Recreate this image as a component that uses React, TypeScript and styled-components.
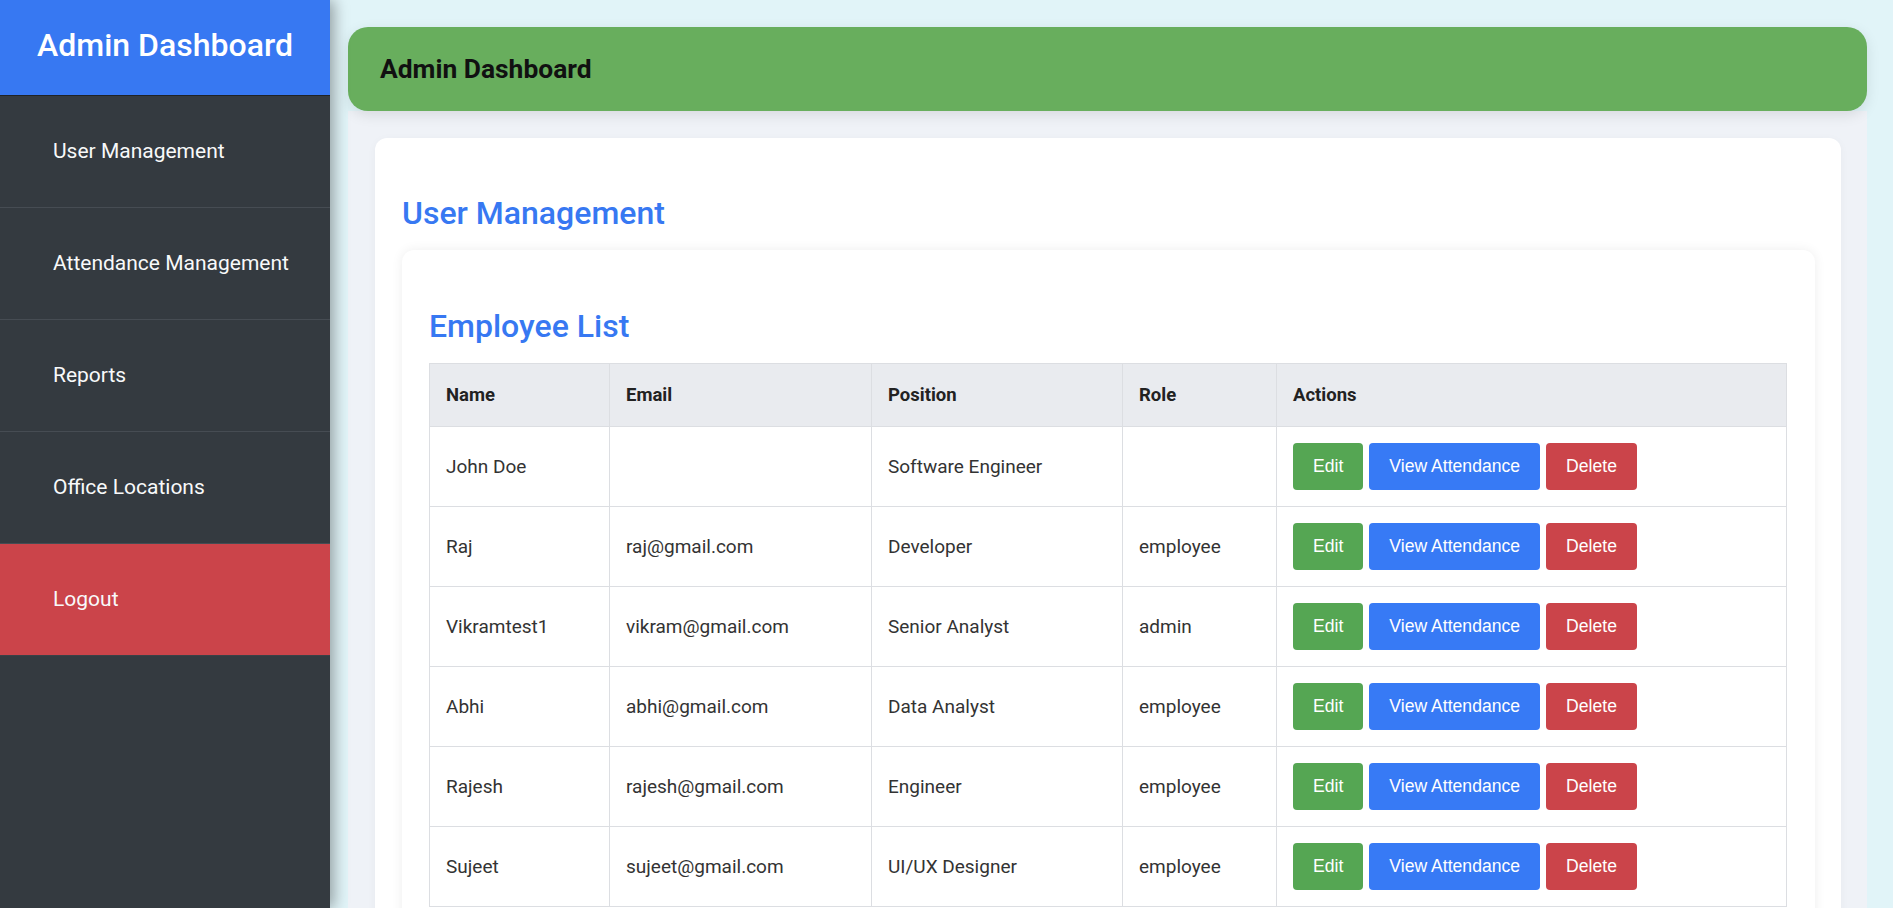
import React from "react";
import styled, { createGlobalStyle } from "styled-components";

const GlobalStyle = createGlobalStyle`
  html, body {
    margin: 0;
    padding: 0;
    height: 100%;
    overflow: hidden;
  }
  body {
    font-family: Roboto, "Noto Sans", sans-serif;
    background: #e1f4f8;
  }
  * {
    box-sizing: border-box;
  }
`;

const Layout = styled.div`
  display: flex;
  height: 100vh;
  overflow: hidden;
`;

const Sidebar = styled.aside`
  width: 330px;
  flex-shrink: 0;
  background: #343a40;
  box-shadow: 4px 0 14px rgba(0, 0, 0, 0.35);
  position: relative;
  z-index: 2;
  display: flex;
  flex-direction: column;
`;

const Brand = styled.div`
  height: 96px;
  padding-bottom: 6px;
  background: #3778f2;
  border-bottom: 1px solid #1f2327;
  color: #fff;
  font-size: 32px;
  font-weight: 500;
  display: flex;
  align-items: center;
  justify-content: center;
`;

const NavItem = styled.div<{ $danger?: boolean }>`
  padding: 44px 12px 44px 53px;
  line-height: 23px;
  font-size: 21px;
  white-space: nowrap;
  color: #f8f9fa;
  background: ${(p) => (p.$danger ? "#cb444a" : "transparent")};
  border-bottom: 1px solid ${(p) => (p.$danger ? "#3b4046" : "#464c53")};
`;

const Main = styled.main`
  flex: 1;
  padding: 27px 26px 0 18px;
  display: flex;
  flex-direction: column;
  min-width: 0;
`;

const TopBar = styled.header`
  height: 84px;
  flex-shrink: 0;
  background: #68ae5d;
  border-radius: 20px;
  padding: 0 32px;
  display: flex;
  align-items: center;
  box-shadow: 0 4px 14px rgba(0, 0, 0, 0.1);
  position: relative;
  z-index: 1;
`;

const TopTitle = styled.h1`
  margin: 0;
  font-size: 26.4px;
  font-weight: 700;
  color: #111;
`;

const Content = styled.section`
  flex: 1;
  background: #eff2f7;
  padding: 27px 26px 27px 27px;
`;

const Card = styled.div`
  background: #fff;
  border-radius: 12px;
  padding: 56px 26px 27px 27px;
  box-shadow: 0 2px 10px rgba(0, 0, 0, 0.04);
`;

const InnerCard = styled(Card)`
  padding: 57px 28px 60px 27px;
  box-shadow: 0 0 12px rgba(0, 0, 0, 0.07);
`;

const Heading = styled.h2`
  margin: 0 0 18px;
  font-size: 32px;
  font-weight: 500;
  color: #3778f2;
  line-height: normal;
`;

const Table = styled.table`
  width: 100%;
  border-collapse: collapse;
  border: 1px solid #dcdee2;
  font-size: 19px;
  color: #333;
  table-layout: fixed;
`;

const Th = styled.th`
  background: #e9ebef;
  text-align: left;
  font-size: 18.5px;
  font-weight: 700;
  color: #222;
  padding: 20px 16px;
  border: 1px solid #dcdee2;
`;

const Td = styled.td`
  padding: 16px;
  border: 1px solid #dcdee2;
  height: 80px;
`;

const Actions = styled.div`
  display: flex;
  gap: 6px;
`;

const Button = styled.button<{ $color: string }>`
  font-family: "Liberation Sans", Arial, sans-serif;
  font-size: 17.6px;
  line-height: 21px;
  padding: 13px 20px;
  color: #fff;
  background: ${(p) => p.$color};
  border: none;
  border-radius: 4px;
  cursor: pointer;
`;

const employees = [
  { name: "John Doe", email: "", position: "Software Engineer", role: "" },
  { name: "Raj", email: "raj@gmail.com", position: "Developer", role: "employee" },
  { name: "Vikramtest1", email: "vikram@gmail.com", position: "Senior Analyst", role: "admin" },
  { name: "Abhi", email: "abhi@gmail.com", position: "Data Analyst", role: "employee" },
  { name: "Rajesh", email: "rajesh@gmail.com", position: "Engineer", role: "employee" },
  { name: "Sujeet", email: "sujeet@gmail.com", position: "UI/UX Designer", role: "employee" },
];

const navItems = ["User Management", "Attendance Management", "Reports", "Office Locations"];

export default function App() {
  return (
    <>
      <GlobalStyle />
      <Layout>
        <Sidebar>
          <Brand>Admin Dashboard</Brand>
          {navItems.map((item) => (
            <NavItem key={item}>{item}</NavItem>
          ))}
          <NavItem $danger>Logout</NavItem>
        </Sidebar>
        <Main>
          <TopBar>
            <TopTitle>Admin Dashboard</TopTitle>
          </TopBar>
          <Content>
            <Card>
              <Heading>User Management</Heading>
              <InnerCard>
                <Heading>Employee List</Heading>
                <Table>
                  <colgroup>
                    <col style={{ width: 180 }} />
                    <col style={{ width: 262 }} />
                    <col style={{ width: 251 }} />
                    <col style={{ width: 154 }} />
                    <col />
                  </colgroup>
                  <thead>
                    <tr>
                      <Th>Name</Th>
                      <Th>Email</Th>
                      <Th>Position</Th>
                      <Th>Role</Th>
                      <Th>Actions</Th>
                    </tr>
                  </thead>
                  <tbody>
                    {employees.map((e) => (
                      <tr key={e.name}>
                        <Td>{e.name}</Td>
                        <Td>{e.email}</Td>
                        <Td>{e.position}</Td>
                        <Td>{e.role}</Td>
                        <Td>
                          <Actions>
                            <Button $color="#55a653">Edit</Button>
                            <Button $color="#377af5">View Attendance</Button>
                            <Button $color="#cb444a">Delete</Button>
                          </Actions>
                        </Td>
                      </tr>
                    ))}
                  </tbody>
                </Table>
              </InnerCard>
            </Card>
          </Content>
        </Main>
      </Layout>
    </>
  );
}
